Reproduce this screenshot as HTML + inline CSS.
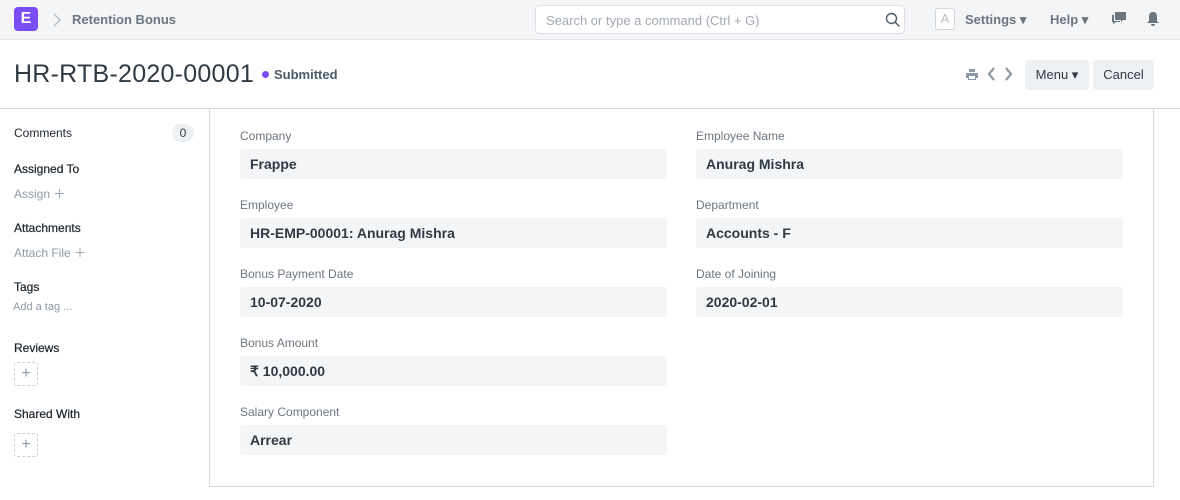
<!DOCTYPE html>
<html><head><style>
*{box-sizing:border-box;margin:0;padding:0}
body{width:1180px;height:500px;overflow:hidden;background:#fff;font-family:"Liberation Sans",sans-serif;color:#1f272e;position:relative}
.nav{position:absolute;left:0;top:0;width:1180px;height:40px;background:#f4f5f7;border-bottom:1px solid #e2e6e9}
.a{position:absolute}
.logo{left:14px;top:7px;width:24px;height:24px;background:#7b4df5;border-radius:4px;color:#fff;font-weight:bold;font-size:16px;text-align:center;line-height:24px}
.crumb{left:72px;top:12px;font-size:13px;font-weight:bold;color:#6c7680}
.search{left:535px;top:5px;width:370px;height:29px;border:1px solid #dce0e4;border-radius:4px;background:#fff;font-size:13px;color:#a2a9b1;padding:7px 10px}
.navt{font-size:13px;font-weight:bold;color:#6c7680;top:12px}
.title{left:14px;top:60px;font-size:25px;letter-spacing:0.25px;color:#2f3a44}
.btn{top:60px;height:30px;background:#eef1f4;border-radius:4px;font-size:13px;color:#2f3a44;text-align:center;line-height:30px}
.hr{left:0;top:108px;width:1180px;height:1px;background:#d1d8dd}
.form{left:209px;top:108px;width:945px;height:379px;border:1px solid #d1d8dd;border-top:none}
.side{font-size:12px;color:#1f272e;left:14px;-webkit-text-stroke:0.25px #1f272e}
.sl{font-size:12px;color:#8d99a6;left:14px}
.lbl{font-size:12px;color:#6c7680}
.fld{width:427px;height:30px;background:#f4f5f7;border-radius:3px;font-size:14px;font-weight:bold;color:#2f3a44;padding:7px 10px}
.dash{left:14px;width:24px;height:24px;border:1px dashed #c8cfd5;border-radius:3px;color:#8d99a6;text-align:center;line-height:22px;font-size:16px}
</style></head><body>
<div class="nav"></div>
<div class="a logo">E</div>
<svg class="a" style="left:52px;top:13px" width="10" height="14"><path d="M2 1l6 6-6 6" stroke="#b8c0c8" stroke-width="1.5" fill="none"/></svg>
<div class="a crumb">Retention Bonus</div>
<div class="a search">Search or type a command (Ctrl + G)</div>
<svg class="a" style="left:885px;top:12px" width="16" height="16"><circle cx="6.5" cy="6.5" r="5" stroke="#4c5a67" stroke-width="1.4" fill="none"/><path d="M10 10l4.5 4.5" stroke="#4c5a67" stroke-width="1.4"/></svg>
<div class="a" style="left:935px;top:8px;width:20px;height:22px;border:1px solid #d1d8dd;border-radius:3px;color:#b8c0c8;font-size:13px;text-align:center;line-height:20px;background:#fff">A</div>
<div class="a navt" style="left:965px">Settings ▾</div>
<div class="a navt" style="left:1050px">Help ▾</div>
<svg class="a" style="left:1111px;top:11px" width="16" height="14"><path d="M4 1h11v8h-3l-2 2v-2H4z" fill="#6c7680"/><path d="M1 4h2v6h6v1H5l-3 2v-2H1z" fill="#6c7680"/></svg>
<svg class="a" style="left:1146px;top:11px" width="14" height="16"><path d="M7 1c3 0 4 2 4 5v4l2 2H1l2-2V6c0-3 1-5 4-5z M5 13h4a2 2 0 0 1-4 0z" fill="#6c7680"/></svg>
<div class="a title">HR-RTB-2020-00001</div>
<div class="a" style="left:262px;top:71px;width:7px;height:7px;border-radius:50%;background:#7b4df5"></div>
<div class="a" style="left:274px;top:67px;font-size:13px;font-weight:bold;color:#4c5a67">Submitted</div>
<svg class="a" style="left:965px;top:68px" width="14" height="13"><path d="M4 1h6v3H4z M1 5h12v5h-2v2H3v-2H1z" fill="#8d99a6"/><rect x="4" y="8" width="6" height="3" fill="#fff"/></svg>
<svg class="a" style="left:987px;top:67px" width="30" height="14"><path d="M7 1L2 7l5 6" stroke="#8d99a6" stroke-width="2.2" fill="none"/><path d="M19 1l5 6-5 6" stroke="#8d99a6" stroke-width="2.2" fill="none"/></svg>
<div class="a btn" style="left:1025px;width:64px">Menu ▾</div>
<div class="a btn" style="left:1093px;width:61px">Cancel</div>
<div class="a hr"></div>
<div class="a form"></div>
<div class="a side" style="top:126px;-webkit-text-stroke:0">Comments</div>
<div class="a" style="left:172px;top:124px;width:22px;height:18px;border-radius:9px;background:#eef1f4;font-size:12px;text-align:center;line-height:18px;color:#2f3a44">0</div>
<div class="a side" style="top:162px">Assigned To</div>
<div class="a sl" style="top:185px">Assign ＋</div>
<div class="a side" style="top:221px">Attachments</div>
<div class="a sl" style="top:244px">Attach File ＋</div>
<div class="a side" style="top:280px">Tags</div>
<div class="a sl" style="top:301px;left:13px;font-size:11px">Add a tag ...</div>
<div class="a side" style="top:341px">Reviews</div>
<div class="a dash" style="top:362px">+</div>
<div class="a side" style="top:407px">Shared With</div>
<div class="a dash" style="top:433px">+</div>

<div class="a lbl" style="left:240px;top:129px">Company</div>
<div class="a fld" style="left:240px;top:149px">Frappe</div>
<div class="a lbl" style="left:240px;top:198px">Employee</div>
<div class="a fld" style="left:240px;top:218px">HR-EMP-00001: Anurag Mishra</div>
<div class="a lbl" style="left:240px;top:267px">Bonus Payment Date</div>
<div class="a fld" style="left:240px;top:287px">10-07-2020</div>
<div class="a lbl" style="left:240px;top:336px">Bonus Amount</div>
<div class="a fld" style="left:240px;top:356px">₹ 10,000.00</div>
<div class="a lbl" style="left:240px;top:405px">Salary Component</div>
<div class="a fld" style="left:240px;top:425px">Arrear</div>

<div class="a lbl" style="left:696px;top:129px">Employee Name</div>
<div class="a fld" style="left:696px;top:149px">Anurag Mishra</div>
<div class="a lbl" style="left:696px;top:198px">Department</div>
<div class="a fld" style="left:696px;top:218px">Accounts - F</div>
<div class="a lbl" style="left:696px;top:267px">Date of Joining</div>
<div class="a fld" style="left:696px;top:287px">2020-02-01</div>
</body></html>
